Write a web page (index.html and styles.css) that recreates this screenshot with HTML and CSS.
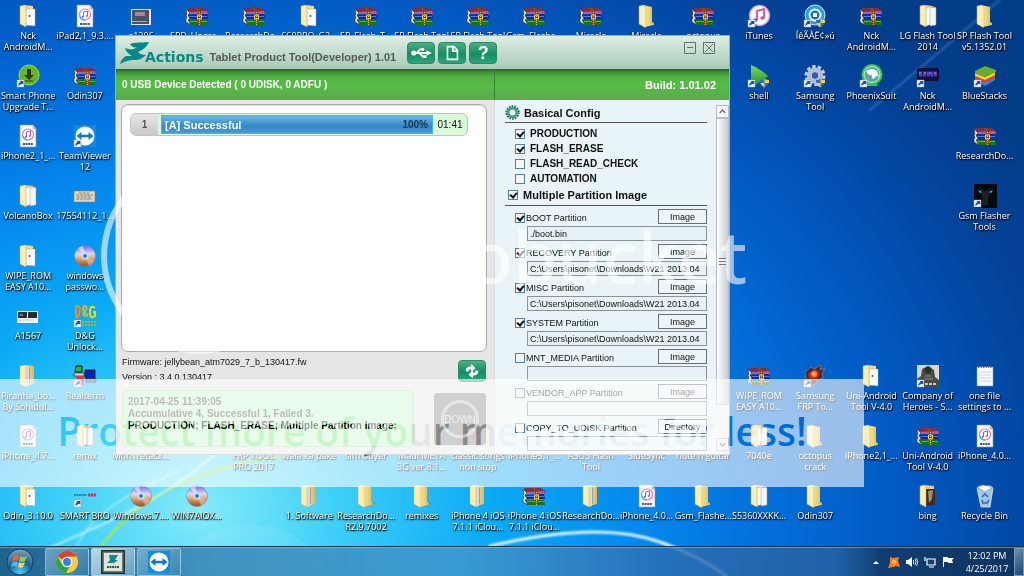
FILE: index.html
```html
<!DOCTYPE html>
<html lang="en">
<head>
<meta charset="utf-8">
<title>Desktop</title>
<link rel="stylesheet" href="styles.css">
</head>
<body>
<svg class="defs" aria-hidden="true">
<defs>
<linearGradient id="gf" x1="0" x2="1"><stop offset="0" stop-color="#fdf3b4"/><stop offset="1" stop-color="#d9b956"/></linearGradient>
<linearGradient id="gp" x1="0" x2="0" y1="0" y2="1"><stop offset="0" stop-color="#7ddd5c"/><stop offset="1" stop-color="#1c8a1c"/></linearGradient>
<linearGradient id="gd" x1="0" x2="0" y1="0" y2="1"><stop offset="0" stop-color="#6a6ae8"/><stop offset=".4" stop-color="#d8d8fa"/><stop offset=".55" stop-color="#e8b888"/><stop offset="1" stop-color="#9a4a1c"/></linearGradient>
<symbol id="arrow" viewBox="0 0 24 24"><path d="M1 16h7v7H1z" fill="#f4f8fc" stroke="#8aa" stroke-width=".5"/><path d="M2.500 22q-.5-3 2-4l-1-1h3.800v3.800l-1-1q-2 .5-3.800 2.200z" fill="#1b4ea8"/></symbol>
<symbol id="shield" viewBox="0 0 24 24"><path d="M13 16q3 0 4.500-1.500Q19 16 22 16q0 5-4.500 7.500Q13 21 13 16z" fill="#2a6fd0"/><path d="M17.500 14.500Q19 16 22 16v3h-4.500zM17.500 19v4.500Q14 22 13.300 19z" fill="#f6cf2c"/></symbol>
<symbol id="folder" viewBox="0 0 24 24"><path d="M8 21l9-1 4-2-3 4-8 1z" fill="#000" opacity=".25"/><path d="M8 1l9 2v15l2 1v2l-9 2z" fill="url(#gf)"/><path d="M4 2l5-1 2 3v19l-1 .5L4 20z" fill="#fbeeb0" stroke="#c8a850" stroke-width=".5"/></symbol>
<symbol id="docs" viewBox="0 0 24 24"><path d="M9 1l8 1v18l-8 2z" fill="#e7cd79"/><path d="M10 4l5-1v17l-5 2z" fill="#fff" stroke="#bbb" stroke-width=".5"/><path d="M14 4l5-1 1 1v17l-6 1z" fill="#f4f6f8" stroke="#999" stroke-width=".5"/><path d="M4 2l5-1 1 3v19L4 20z" fill="#fbeeb0" stroke="#c8a850" stroke-width=".5"/></symbol>
<symbol id="doc1" viewBox="0 0 24 24"><path d="M8 1l9 1v18l-8 2z" fill="#efd98e"/><path d="M10 5h9v17l-9-1z" fill="#fbfdff" stroke="#aaa" stroke-width=".5"/><circle cx="13.500" cy="12" r="1" fill="#357"/><path d="M4 2l5-1 1 3v19L4 20z" fill="#fbeeb0" stroke="#c8a850" stroke-width=".5"/></symbol>
<symbol id="zipf" viewBox="0 0 24 24"><path d="M8 1l10 1v18l-9 2z" fill="url(#gf)"/><path d="M10 4l3-1v19l-3 1z" fill="#d6dbe0"/><path d="M13 3l1 1v15l-1 1z" fill="#98a0a8"/><path d="M4 2l5-1 1 3v19L4 20z" fill="#fbeeb0" stroke="#c8a850" stroke-width=".5"/></symbol>
<symbol id="rar" viewBox="0 0 24 24"><path d="M1 5l3-1h15l4 3v3H4z" fill="#7a3048"/><path d="M4 8l18-1 1 3H5z" fill="#b85a98"/><path d="M2 11l20-1 1 5H4z" fill="#1a2890"/><path d="M4 12h18v1H5z" fill="#5878f0"/><path d="M2 16h20l1 5H5z" fill="#157418"/><path d="M5 17h17v1H5z" fill="#3fc13f"/><path d="M1 5l4 4-2 2 2 4-2 1 3 5-5-3v-3l1-1-1-3 1-1z" fill="#ede6e0" stroke="#333" stroke-width=".6"/><path d="M10 4l3 3v14h3V7l-3-3z" fill="#8b4a1c"/><path d="M14.500 8v13" stroke="#e9b847" stroke-dasharray="1 1"/><path d="M12.500 11h4v4h-4z" fill="none" stroke="#f2d35c"/></symbol>
<symbol id="ipsw" viewBox="0 0 24 24"><path d="M4 1h13l3 4v18H4z" fill="#f8f8fa" stroke="#999" stroke-width=".6"/><path d="M17 1v4h3" fill="#ccd" stroke="#999" stroke-width=".5"/><circle cx="12" cy="10.500" r="5.500" fill="#fff" stroke="#d777bd" stroke-width="1.200"/><path d="M6.800 12a5.500 5.500 0 0 0 5.200 4" fill="none" stroke="#5aa6f0" stroke-width="1.300"/><path d="M10.500 13V8l4-1v5" fill="none" stroke="#b24ad0"/><circle cx="9.700" cy="13" r="1" fill="#4b7df0"/><circle cx="13.700" cy="12" r="1" fill="#f0509a"/><path d="M7 20h10" stroke="#555" stroke-width="2" stroke-dasharray="2 .6"/></symbol>
<symbol id="disc" viewBox="0 0 24 24"><circle cx="12" cy="12" r="10.500" fill="url(#gd)" stroke="#888" stroke-width=".6"/><path d="M12 12L5 4a10 10 0 0 1 5-2z" fill="#fff" opacity=".5"/><path d="M12 12l4 10a10 10 0 0 0 5-5z" fill="#fff" opacity=".3"/><circle cx="12" cy="12" r="3.500" fill="#dde"/><circle cx="12" cy="12" r="2" fill="#1688dc"/></symbol>
<symbol id="tv" viewBox="0 0 24 24"><path d="M1 1h22v22H1z" fill="#1489e0"/><circle cx="12" cy="12" r="9.500" fill="#fff"/><path d="M3.500 12l5-4v2.700h7V8l5 4-5 4v-2.700h-7V16z" fill="#1276d8"/></symbol>
<symbol id="down" viewBox="0 0 24 24"><circle cx="13" cy="11" r="10" fill="#69b51f" stroke="#9bdd4d"/><path d="M11 5h4v6h3l-5 5-5-5h3z" fill="#263a20"/><path d="M9 17h8" stroke="#263a20"/></symbol>
<symbol id="photo" viewBox="0 0 24 24"><path d="M2 5h20v16H2z" fill="#dfe3e8"/><path d="M3 6h17v14H3z" fill="#4b5268"/><path d="M6 8h10v4H6z" fill="#8a90a8"/><path d="M8 10h6v1H8z" fill="#e06878"/><path d="M3 17h15v1H3z" fill="#aab"/></symbol>
<symbol id="card" viewBox="0 0 24 24"><path d="M1 7h21v11H1z" fill="#e2d8c6" stroke="#8a7c68" stroke-width=".6"/><path d="M6 9h11M3 11h17M4 13h14M3 15h16" stroke="#7c6858" stroke-width=".8" stroke-dasharray="3 .7"/></symbol>
<symbol id="phones" viewBox="0 0 24 24"><path d="M1 7h21v12H1z" fill="#f4f4f4"/><path d="M2 8h9v6H2zM12 8h9v6h-9z" fill="#282b34"/><path d="M4 10h3v2H4z" fill="#6f7f94"/><path d="M3 16h15" stroke="#ccc"/></symbol>
<symbol id="dg" viewBox="0 0 24 24"><path d="M3 2h2q4 2 0 11H3z" fill="none" stroke="#f08a28" stroke-width="2"/><path d="M15 13L10 6q0-4 2-4t1.500 3L10 10q1 4 5 0" fill="none" stroke="#d9b81e" stroke-width="1.800"/><path d="M22 4q-5-4-5 4t5 4V8h-2" fill="none" stroke="#f0d820" stroke-width="2"/><path d="M9 18h14M9 21h14" stroke="#9ab838" stroke-width="2" stroke-dasharray="2 1"/></symbol>
<symbol id="term" viewBox="0 0 24 24"><path d="M3 2h6v6H2z" fill="#29b53a" stroke="#111"/><path d="M12 6h10v8H12z" fill="#1020c0" stroke="#222"/><path d="M13 15h10v3H13z" fill="#777" stroke="#222"/><path d="M1 9h10v3H1z" fill="#d8d8d8" stroke="#222" stroke-width=".7"/><path d="M2 12h9v9H8z" fill="#dd3a3a"/></symbol>
<symbol id="itunes" viewBox="0 0 24 24"><circle cx="12.500" cy="11.500" r="10" fill="#fff" stroke="#c9a0e0" stroke-width="1.400"/><path d="M10 16V7l7-2v9" fill="none" stroke="#e0489a" stroke-width="1.800"/><ellipse cx="8.500" cy="16" rx="2.300" ry="1.800" fill="#8a5be0"/><ellipse cx="15.500" cy="14" rx="2.300" ry="1.800" fill="#f0506a"/></symbol>
<symbol id="ring" viewBox="0 0 24 24"><circle cx="12" cy="11" r="10" fill="#2a9fdc" stroke="#c4e8f8"/><circle cx="12" cy="11" r="5.500" fill="#1478bc" stroke="#fff" stroke-width="1.800"/><path d="M10 9h4v4h-4z" fill="#fff"/></symbol>
<symbol id="play" viewBox="0 0 24 24"><path d="M4 1q10 4 17 11Q13 19 4 23z" fill="url(#gp)"/></symbol>
<symbol id="gear" viewBox="0 0 24 24"><circle cx="12" cy="11.500" r="8.500" fill="none" stroke="#c6cce4" stroke-width="4" stroke-dasharray="3.300 2"/><circle cx="12" cy="11.500" r="5.500" fill="none" stroke="#b4bcd8" stroke-width="5"/><circle cx="12" cy="11.500" r="3" fill="#355e9c"/></symbol>
<symbol id="phoenix" viewBox="0 0 24 24"><path d="M7 22h12l-2-4H9z" fill="#3cc13e"/><circle cx="13" cy="10.500" r="9.500" fill="#58a8a8" stroke="#31cc38" stroke-width="2"/><circle cx="13" cy="10.500" r="8" fill="none" stroke="#e6f6ea" stroke-width=".8"/><path d="M7 7q6-4 11 0l2 6q-3-3-5 2-3-1-2-4-4 1-6-4z" fill="#f4faf4"/></symbol>
<symbol id="nck" viewBox="0 0 24 24"><rect x="1" y="4" width="22" height="13" rx="3" fill="#10103c"/><path d="M3 10h18" stroke="#5d3cc0" stroke-width="5" stroke-dasharray="3 .8" fill="none"/><path d="M3 9h17" stroke="#58b8f0" stroke-dasharray="2 3"/></symbol>
<symbol id="bs" viewBox="0 0 24 24"><path d="M2 14l10 4 10-5v3l-10 6-10-5z" fill="#2d88d8"/><path d="M2 11l10 4 10-5v4l-10 5-10-4z" fill="#e23c2f"/><path d="M2 9l10 4 10-5v3l-10 5-10-4z" fill="#f8d22c"/><path d="M2 7l10-5 11 4v2l-11 5L2 9z" fill="#68ad2a"/></symbol>
<symbol id="flash" viewBox="0 0 24 24"><path d="M1 0h23v24H1z" fill="#08090c"/><path d="M5 2q5 7 4 19h6Q14 9 20 2l-6 5h-3z" fill="#1c1f24"/><path d="M5 6l4 2-2 1zM20 6l-4 2 2 1z" fill="#2fd6ec"/></symbol>
<symbol id="dragon" viewBox="0 0 24 24"><path d="M2 8l6-5 3 2 7-4-1 5 5-2-3 5 1 5-5 2-5 6-4-5-3-3z" fill="#4a2830" stroke="#a88" stroke-width=".6"/><path d="M5 10l7-5 5 4-4 8-6-1z" fill="#b8301c"/><circle cx="11" cy="10" r="3" fill="#ff8a2a"/><circle cx="11" cy="10" r="1" fill="#ffe9a0"/></symbol>
<symbol id="company" viewBox="0 0 24 24"><path d="M1 1h22v22H1z" fill="#d5d8d2"/><path d="M1 23v-8l4-3 1-7 6-3 6 4 1 7 4 3v7z" fill="#4a4c44"/><circle cx="12" cy="6" r="3.500" fill="#2b2d27"/><path d="M9 12h6M8 15h9" stroke="#8a8c80"/><path d="M9 20h12" stroke="#eee" stroke-width="1.500" stroke-dasharray="3 1"/></symbol>
<symbol id="note" viewBox="0 0 24 24"><path d="M4 3h16v19H4z" fill="#f7f9fb" stroke="#99a" stroke-width=".6"/><path d="M5 3h14" stroke="#667" stroke-width="2" stroke-dasharray="1 1.500"/><path d="M6 8h12M6 11h12M6 14h12M6 17h12" stroke="#cdd5e0"/></symbol>
<symbol id="bin" viewBox="0 0 24 24"><path d="M4 4l3-2h10l3 2-3 19H8z" fill="#c5d6e4" fill-opacity=".85" stroke="#e9f5ff" stroke-width=".7"/><path d="M4 4q8 4 16 0" fill="none" stroke="#89a9c4"/><path d="M6 4l4-3 5 2 3 1-6 3z" fill="#fff"/><path d="M9 13l3-3 3 3M9 16l1 3h4l2-3" fill="none" stroke="#2270c8" stroke-width="1.600"/></symbol>
<symbol id="bingf" viewBox="0 0 24 24"><path d="M8 1l10 1v18l-9 2z" fill="#e7cd79"/><path d="M10 5h9v16l-9 1z" fill="#3a2a24"/><path d="M12 7l5-1-1 9-3 4z" fill="#a78a78"/><path d="M4 2l5-1 1 3v19L4 20z" fill="#fbeeb0" stroke="#c8a850" stroke-width=".5"/></symbol>
<symbol id="bro" viewBox="0 0 24 24"><path d="M1 11h13" stroke="#2b86b4" stroke-width="2" stroke-dasharray="2 .5"/><path d="M15 11h8" stroke="#e8285c" stroke-width="3" stroke-dasharray="2.300 .5"/></symbol>
</defs>
</svg>

<main class="desktop">
<svg class="wallpaper" viewBox="0 0 1024 576" preserveAspectRatio="none" aria-hidden="true">
<defs><filter id="soft"><feGaussianBlur stdDeviation="1.200"/></filter></defs>
<circle cx="250" cy="620" r="95" fill="#fff" opacity=".08"/>
<g fill="none" stroke-linecap="round" filter="url(#soft)">
<path d="M100 548C135 500 190 470 280 456" stroke="#a8e83c" stroke-width="2.500"/>
<path d="M50 548C110 520 170 500 230 440" stroke="#e8fcff" stroke-width="2" opacity=".7"/>
<path d="M76 548C90 515 125 495 180 470" stroke="#e8fcff" stroke-width="1.500" opacity=".6"/>
<path d="M490 546Q600 520 660 542T740 590" stroke="#dff4ff" stroke-width="3"/>
<path d="M870 110Q930 60 1000 0" stroke="#8fc8f4" stroke-width="2" opacity=".3"/>
</g>
</svg>

<nav class="icons" aria-label="Desktop items">
<div class="col">
<a href="#" class="item"><svg><use href="#doc1"/></svg><span>Nck<br>AndroidM...</span></a>
<a href="#" class="item"><svg><use href="#down"/><use href="#arrow"/></svg><span>Smart Phone<br>Upgrade T...</span></a>
<a href="#" class="item"><svg><use href="#ipsw"/></svg><span>iPhone2_1_...</span></a>
<a href="#" class="item"><svg><use href="#docs"/></svg><span>VolcanoBox</span></a>
<a href="#" class="item"><svg><use href="#doc1"/></svg><span>WIPE_ROM<br>EASY A10...</span></a>
<a href="#" class="item"><svg><use href="#phones"/></svg><span>A1567</span></a>
<a href="#" class="item"><svg><use href="#zipf"/></svg><span>Piranha_bo...<br>By Sohidul...</span></a>
<a href="#" class="item"><svg><use href="#ipsw"/></svg><span>iPhone_4.7...</span></a>
<a href="#" class="item"><svg><use href="#doc1"/></svg><span>Odin_3.10.0</span></a>
</div>
<div class="col">
<a href="#" class="item"><svg><use href="#ipsw"/></svg><span>iPad2,1_9.3....</span></a>
<a href="#" class="item"><svg><use href="#rar"/></svg><span>Odin307</span></a>
<a href="#" class="item"><svg><use href="#tv"/><use href="#arrow"/></svg><span>TeamViewer<br>12</span></a>
<a href="#" class="item"><svg><use href="#card"/></svg><span>17554112_1...</span></a>
<a href="#" class="item"><svg><use href="#disc"/></svg><span>windows<br>passwo...</span></a>
<a href="#" class="item"><svg><use href="#dg"/><use href="#arrow"/></svg><span>D&amp;G<br>Unlock...</span></a>
<a href="#" class="item"><svg><use href="#term"/><use href="#arrow"/></svg><span>Realterm</span></a>
<a href="#" class="item"><svg><use href="#docs"/></svg><span>remix</span></a>
<a href="#" class="item"><svg><use href="#bro"/><use href="#arrow"/></svg><span>SMART BRO</span></a>
</div>
<div class="col">
<a href="#" class="item"><svg><use href="#photo"/></svg><span>e1206</span></a>
<a href="#" class="item row8"><svg><use href="#folder"/></svg><span>MonTretacx...</span></a>
<a href="#" class="item row9"><svg><use href="#disc"/></svg><span>Windows.7....</span></a>
</div>
<div class="col">
<a href="#" class="item"><svg><use href="#rar"/></svg><span>SPD_Upgra...</span></a>
<a href="#" class="item row9"><svg><use href="#disc"/></svg><span>WIN7AIOX...</span></a>
</div>
<div class="col">
<a href="#" class="item"><svg><use href="#rar"/></svg><span>ResearchDo...</span></a>
<a href="#" class="item row8"><svg><use href="#folder"/></svg><span>FRP TOOL<br>PRO 2017</span></a>
</div>
<div class="col">
<a href="#" class="item"><svg><use href="#doc1"/></svg><span>660PRO_G2...</span></a>
<a href="#" class="item row8"><svg><use href="#folder"/></svg><span>wala ka pake</span></a>
<a href="#" class="item row9"><svg><use href="#zipf"/></svg><span>1. Software</span></a>
</div>
<div class="col">
<a href="#" class="item"><svg><use href="#rar"/></svg><span>SP_Flash_T...</span></a>
<a href="#" class="item row8"><svg><use href="#folder"/></svg><span>sim buyer</span></a>
<a href="#" class="item row9"><svg><use href="#folder"/></svg><span>ResearchDo...<br>R2.9.7002</span></a>
</div>
<div class="col">
<a href="#" class="item"><svg><use href="#rar"/></svg><span>SP Flash Tool</span></a>
<a href="#" class="item row8"><svg><use href="#folder"/></svg><span>Maui META<br>3G ver 8.1...</span></a>
<a href="#" class="item row9"><svg><use href="#folder"/></svg><span>remixes</span></a>
</div>
<div class="col">
<a href="#" class="item"><svg><use href="#rar"/></svg><span>SP Flash Tool</span></a>
<a href="#" class="item row8"><svg><use href="#folder"/></svg><span>classic songs<br>non stop</span></a>
<a href="#" class="item row9"><svg><use href="#zipf"/></svg><span>iPhone 4 iOS<br>7.1.1 iClou...</span></a>
</div>
<div class="col">
<a href="#" class="item"><svg><use href="#rar"/></svg><span>Gsm_Flashe...</span></a>
<a href="#" class="item row8"><svg><use href="#folder"/></svg><span>iPhone5,1_...</span></a>
<a href="#" class="item row9"><svg><use href="#rar"/></svg><span>iPhone 4 iOS<br>7.1.1 iClou...</span></a>
</div>
<div class="col">
<a href="#" class="item"><svg><use href="#rar"/></svg><span>Miracle</span></a>
<a href="#" class="item row8"><svg><use href="#folder"/></svg><span>ASUS Flash<br>Tool</span></a>
<a href="#" class="item row9"><svg><use href="#zipf"/></svg><span>ResearchDo...</span></a>
</div>
<div class="col">
<a href="#" class="item"><svg><use href="#folder"/></svg><span>Miracle</span></a>
<a href="#" class="item row8"><svg><use href="#folder"/></svg><span>SideSync</span></a>
<a href="#" class="item row9"><svg><use href="#ipsw"/></svg><span>iPhone_4.0...</span></a>
</div>
<div class="col">
<a href="#" class="item"><svg><use href="#rar"/></svg><span>octopus</span></a>
<a href="#" class="item row8"><svg><use href="#folder"/></svg><span>nute n guitar</span></a>
<a href="#" class="item row9"><svg><use href="#folder"/></svg><span>Gsm_Flashe...</span></a>
</div>
<div class="col">
<a href="#" class="item"><svg><use href="#itunes"/><use href="#arrow"/></svg><span>iTunes</span></a>
<a href="#" class="item"><svg><use href="#play"/><use href="#arrow"/><use href="#shield"/></svg><span>shell</span></a>
<a href="#" class="item row7"><svg><use href="#rar"/></svg><span>WIPE_ROM<br>EASY A10...</span></a>
<a href="#" class="item row8"><svg><use href="#docs"/></svg><span>7040e</span></a>
<a href="#" class="item row9"><svg><use href="#docs"/></svg><span>S5360XXKK...</span></a>
</div>
<div class="col">
<a href="#" class="item"><svg><use href="#ring"/><use href="#arrow"/><use href="#shield"/></svg><span>ÍêÃÀË¢»ú</span></a>
<a href="#" class="item"><svg><use href="#gear"/><use href="#arrow"/><use href="#shield"/></svg><span>Samsung<br>Tool</span></a>
<a href="#" class="item row7"><svg><use href="#dragon"/><use href="#arrow"/></svg><span>Samsung<br>FRP To...</span></a>
<a href="#" class="item row8"><svg><use href="#folder"/></svg><span>octopus<br>crack</span></a>
<a href="#" class="item row9"><svg><use href="#folder"/></svg><span>Odin307</span></a>
</div>
<div class="col">
<a href="#" class="item"><svg><use href="#rar"/></svg><span>Nck<br>AndroidM...</span></a>
<a href="#" class="item"><svg><use href="#phoenix"/><use href="#arrow"/></svg><span>PhoenixSuit</span></a>
<a href="#" class="item row7"><svg><use href="#doc1"/></svg><span>Uni-Android<br>Tool V-4.0</span></a>
<a href="#" class="item row8"><svg><use href="#folder"/></svg><span>iPhone2,1_...</span></a>
</div>
<div class="col">
<a href="#" class="item"><svg><use href="#docs"/></svg><span>LG Flash Tool<br>2014</span></a>
<a href="#" class="item"><svg><use href="#nck"/><use href="#arrow"/></svg><span>Nck<br>AndroidM...</span></a>
<a href="#" class="item row7"><svg><use href="#company"/><use href="#arrow"/></svg><span>Company of<br>Heroes - S...</span></a>
<a href="#" class="item row8"><svg><use href="#rar"/></svg><span>Uni-Android<br>Tool V-4.0</span></a>
<a href="#" class="item row9"><svg><use href="#bingf"/></svg><span>bing</span></a>
</div>
<div class="col">
<a href="#" class="item"><svg><use href="#folder"/></svg><span>SP Flash Tool<br>v5.1352.01</span></a>
<a href="#" class="item"><svg><use href="#bs"/><use href="#arrow"/></svg><span>BlueStacks</span></a>
<a href="#" class="item"><svg><use href="#rar"/></svg><span>ResearchDo...</span></a>
<a href="#" class="item"><svg><use href="#flash"/><use href="#arrow"/></svg><span>Gsm Flasher<br>Tools</span></a>
<a href="#" class="item row7"><svg><use href="#note"/></svg><span>one file<br>settings to ...</span></a>
<a href="#" class="item row8"><svg><use href="#ipsw"/></svg><span>iPhone_4.0...</span></a>
<a href="#" class="item row9"><svg><use href="#bin"/></svg><span>Recycle Bin</span></a>
</div>
</nav>

<section class="window" aria-label="Tablet Product Tool">
<header class="titlebar">
<svg class="mark" viewBox="0 0 30 22" aria-hidden="true"><path d="M10 2C14 0 20 1 29 0 27 4 25 6 22 8l-4 2c2 2 4 3 8 3-4 4-7 5-11 5-6 0-9 1-15 4 1-4 3-6 6-8h6C9 12 6 10 5 6c5 2 9 2 12-1C14 6 12 5 10 2z" fill="#068a87"/></svg>
<strong class="brand">Actions</strong>
<h1>Tablet Product Tool(Developer) 1.01</h1>
<div class="tools">
<button class="green" type="button" aria-label="USB"><svg viewBox="0 0 28 22"><path d="M6 11h15M9 11l4-4h3M12 11l4 4h3" fill="none" stroke="#fff" stroke-width="2"/><circle cx="6" cy="11" r="2.800" fill="#fff"/><path d="M20 8l6 3-6 3z" fill="#fff"/><circle cx="16" cy="7" r="1.700" fill="#fff"/><path d="M16 13.500h4v3h-4z" fill="#fff"/></svg></button>
<button class="green" type="button" aria-label="New file"><svg viewBox="0 0 28 22"><path d="M9 4h7l4 4v10H9zM15 4v5h5" fill="none" stroke="#fff" stroke-width="1.800"/></svg></button>
<button class="green help" type="button" aria-label="Help">?</button>
</div>
<div class="controls">
<button type="button" aria-label="Minimize"><svg viewBox="0 0 12 12"><path d="M.5.500h11v11H.5zM3 5.500h6" fill="none" stroke="#667069"/></svg></button>
<button type="button" aria-label="Close"><svg viewBox="0 0 12 12"><path d="M.5.500h11v11H.5zM2 2l8 8M10 2l-8 8" fill="none" stroke="#667069"/></svg></button>
</div>
</header>
<div class="statusbar"><span class="detected">0 USB Device Detected ( 0 UDISK, 0 ADFU )</span><span class="build">Build: 1.01.02</span></div>
<div class="content">
<div class="left">
<div class="devices">
<div class="device"><span class="num">1</span><div class="progress"><span>[A] Successful</span><span class="pct">100%</span></div><span class="time">01:41</span></div>
</div>
<div class="info">
<div><p>Firmware: jellybean_atm7029_7_b_130417.fw</p><p>Version : 3.4.0.130417</p></div>
<button class="green" type="button" aria-label="Refresh"><svg viewBox="0 0 28 22"><path d="M7 11q0-5 6-5V3l5 5-5 4V9q-3 0-3 3zM21 11q0 5-6 5v3l-5-4 5-5v3q3 0 3-3z" fill="#fff"/></svg></button>
</div>
<div class="bottom">
<div class="log"><p>2017-04-25 11:39:05</p><p>Accumulative 4, Successful 1, Failed 3.</p><p class="dark">PRODUCTION; FLASH_ERASE; Multiple Partition Image;</p></div>
<button class="downbtn" type="button"><span>DOWN</span></button>
</div>
</div>
<div class="right">
<div class="settings">
<h2><svg class="cog" viewBox="0 0 16 16" aria-hidden="true"><circle cx="8" cy="8" r="6.300" fill="none" stroke="#1f6f5c" stroke-width="2.800" stroke-dasharray="1.700 1.100"/><circle cx="8" cy="8" r="4.500" fill="none" stroke="#3a9c80" stroke-width="2.500"/></svg>Basical Config</h2>
<div class="options">
<label><input type="checkbox" checked>PRODUCTION</label>
<label><input type="checkbox" checked>FLASH_ERASE</label>
<label><input type="checkbox">FLASH_READ_CHECK</label>
<label><input type="checkbox">AUTOMATION</label>
</div>
<h2 class="multi"><label><input type="checkbox" checked>Multiple Partition Image</label></h2>
<div class="partitions">
<div class="part"><label><input type="checkbox" checked>BOOT Partition</label><button type="button">Image</button><input type="text" aria-label="BOOT path" value="./boot.bin"></div>
<div class="part"><label><input type="checkbox" checked>RECOVERY Partition</label><button type="button">Image</button><input type="text" aria-label="RECOVERY path" value="C:\Users\pisonet\Downloads\W21 2013.04"></div>
<div class="part"><label><input type="checkbox" checked>MISC Partition</label><button type="button">Image</button><input type="text" aria-label="MISC path" value="C:\Users\pisonet\Downloads\W21 2013.04"></div>
<div class="part"><label><input type="checkbox" checked>SYSTEM Partition</label><button type="button">Image</button><input type="text" aria-label="SYSTEM path" value="C:\Users\pisonet\Downloads\W21 2013.04"></div>
<div class="part"><label><input type="checkbox">MNT_MEDIA Partition</label><button type="button">Image</button><input type="text" aria-label="MNT_MEDIA path"></div>
<div class="part"><label><input type="checkbox">VENDOR_APP Partition</label><button type="button">Image</button><input type="text" aria-label="VENDOR_APP path"></div>
<div class="part"><label><input type="checkbox">COPY_TO_UDISK Partition</label><button type="button">Directory</button><input type="text" aria-label="COPY_TO_UDISK path"></div>
</div>
</div>
<div class="scroll" aria-hidden="true">
<svg viewBox="0 0 12 12"><path d="M3 7.500l3-3 3 3" fill="none" stroke="#556" stroke-width="1.300"/></svg>
<div class="thumb"><i></i></div>
<svg class="sdown" viewBox="0 0 12 12"><path d="M3 4.500l3 3 3-3" fill="none" stroke="#556" stroke-width="1.300"/></svg>
</div>
</div>
</div>
</section>

<div class="logo-mark"><span class="halo"></span><span class="word">photobucket</span></div>
<div class="banner">Protect more of your memories for less!</div>

<footer class="taskbar">
<button class="start" type="button" aria-label="Start"><svg viewBox="0 0 28 28"><defs><radialGradient id="orb" cx=".5" cy=".9" r=".9"><stop offset="0" stop-color="#4fd0f4"/><stop offset=".5" stop-color="#19629c"/><stop offset="1" stop-color="#83a6bd"/></radialGradient></defs><circle cx="14" cy="14" r="13" fill="url(#orb)" stroke="#123c60"/><path d="M7 9q3-3 6-1l-1 5q-3-2-6 1z" fill="#ef6335"/><path d="M14 8q3 2 7 0l-2 5q-3 2-6 0z" fill="#93cc42"/><path d="M6 15q3-3 6-1l-1 5q-3-2-6 0z" fill="#55b4f0"/><path d="M13 14q3 2 6 0l-2 5q-2 2-5 0z" fill="#fbd24a"/></svg></button>
<button class="task" type="button" aria-label="Chrome"><svg viewBox="0 0 24 24"><circle cx="12" cy="12" r="11" fill="#f8cf3a"/><path d="M12 12L2.500 6.500A11 11 0 0 1 21.500 6.500H12z" fill="#e0402f"/><path d="M12 12L7 14 2.500 6.500A11 11 0 0 0 11 23l5-9z" fill="#2fa34c"/><circle cx="12" cy="12" r="5.300" fill="#fff"/><circle cx="12" cy="12" r="4" fill="#3c7ee8"/></svg></button>
<button class="task active" type="button" aria-label="Actions"><svg viewBox="0 0 24 24"><path d="M.8.800h22.400v22.400H.8z" fill="#707a74" stroke="#23302a" stroke-width="1.500"/><path d="M3 3h18v18H3z" fill="#dce4de"/><path d="M8 5h9l-3 5h3l-4 3H6l3-3z" fill="#128a83"/><path d="M6 17h12" stroke="#222" stroke-width="1.500" stroke-dasharray="2 .5"/></svg></button>
<button class="task" type="button" aria-label="TeamViewer"><svg viewBox="0 0 24 24"><use href="#tv"/></svg></button>
<div class="tray">
<svg class="up" viewBox="0 0 12 12"><path d="M3 8l3-3 3 3z" fill="#fff"/></svg>
<svg viewBox="0 0 12 12"><path d="M2 1l3 1 6-1-1 4 2 6-4-1-3 1-5 1 2-5z" fill="#ff7a18"/><circle cx="6" cy="6" r="1.500" fill="none" stroke="#fff" stroke-width=".8"/></svg>
<svg viewBox="0 0 12 12"><path d="M0 4h2l4-3v10L2 8H0z" fill="#fff"/><path d="M7.500 4v4M9 3q2 3 0 6M10.500 2q2.500 4 0 8" stroke="#fff" fill="none" stroke-width=".8"/></svg>
<svg viewBox="0 0 12 12"><path d="M3 3h8v6H3zM5 11h5M1 1v4" fill="#246" fill-opacity=".6" stroke="#fff" stroke-width="1.200"/></svg>
<svg viewBox="0 0 12 12"><path d="M1.500 1v10" stroke="#fff"/><path d="M2 1h4v1h6L10 4l1 3H6V6H2z" fill="#fff"/></svg>
<time>12:02 PM<br>4/25/2017</time>
</div>
<button class="peek" type="button" aria-label="Show desktop"></button>
</footer>
</main>
</body>
</html>
```
FILE: styles.css
```css
* { box-sizing: border-box; }
html, body { height: 100%; }
body { margin: 0; overflow: hidden; font-family: "Liberation Sans", Arial, sans-serif; font-size: 10px; }
p, h1, h2 { margin: 0; }
button { font: inherit; padding: 0; cursor: pointer; }
.defs { position: absolute; width: 0; height: 0; }

.desktop {
  position: relative;
  display: flex;
  flex-direction: column;
  min-height: 100vh;
  isolation: isolate;
  overflow: hidden;
  background: radial-gradient(ellipse 960px 720px at 200px 510px, #86ecfa 0, #3fd0f8 14%, #0cabf6 30%, #058cf0 44%, #0370dc 58%, #0258c0 74%, #034299 90%, #033c88 100%);
}
.wallpaper { position: absolute; inset: 0; width: 100%; height: 100%; }

.icons { position: relative; flex: 1; display: grid; grid-template-columns: repeat(18, minmax(0, 1fr)); padding-right: 12px; }
.col { display: grid; grid-template-rows: repeat(9, 60px); }
.item {
  display: flex; flex-direction: column; align-items: center; gap: 2px; padding-top: 4px;
  color: #fff; text-decoration: none; text-align: center; white-space: nowrap;
  font: 500 9px/11px "Open Sans", "Noto Sans", sans-serif;
  text-shadow: 0 1px 2px #000, 1px 1px 1px #000;
}
.item svg { flex: none; width: 24px; height: 24px; }
.row7 { grid-row: 7; }
.row8 { grid-row: 8; }
.row9 { grid-row: 9; }

.window { position: absolute; left: 115px; right: 294px; top: 35px; border: 1px solid #a3aaa8; background: #e5e5e5; color: #111; }
.titlebar { display: flex; align-items: center; height: 33px; padding: 0 14px 0 4px; background: linear-gradient(#deeee4, #a9cab9); }
.mark { width: 30px; height: 22px; }
.brand { margin-left: -5px; padding-top: 9px; color: #088a86; font: bold 14px "DejaVu Sans", sans-serif; }
.titlebar h1 { margin: 8px 0 0 6px; font-size: 11px; color: #555b57; white-space: nowrap; }
.tools { display: flex; gap: 3px; margin-left: 11px; }
.green { width: 28px; height: 22px; border: 1px solid #2b8a68; border-radius: 4px; background: linear-gradient(#4dae7f, #128e65 55%, #2aa57c); color: #fff; }
.green svg { display: block; width: 26px; height: 20px; }
.help { font-size: 18px; font-weight: bold; line-height: 18px; }
.controls { display: flex; gap: 7px; margin-left: auto; padding-bottom: 10px; }
.controls button { border: 0; background: none; width: 12px; height: 12px; }
.controls svg { display: block; width: 12px; height: 12px; }

.statusbar { display: flex; height: 31px; color: #fff; font-weight: bold; line-height: 32px; background: linear-gradient(#285d24 0, #3f8e34 3px, #51b344 8px, #57bb47 16px, #5ba94a); }
.detected { flex: 1; padding-left: 6px; border-right: 1px solid #3c8535; }
.build { width: 234px; padding-right: 13px; text-align: right; font-size: 11px; }

.content { display: flex; height: 354px; }
.left { flex: 1; min-width: 0; padding: 4px 7px 8px 5px; border-right: 1px solid #d2dcde; }
.devices { height: 248px; padding: 8px; border: 1px solid #aaa; border-radius: 7px; background: #fff; box-shadow: inset 0 1px 1px #ddd; }
.device { display: flex; width: 338px; max-width: 100%; height: 23px; border: 1px solid #bcc8b8; border-radius: 6px; background: #d8fad7; overflow: hidden; }
.num { width: 27px; background: linear-gradient(#e6e6e6, #c9c9c9); font-weight: bold; text-align: center; line-height: 21px; color: #555; }
.progress { flex: 1; display: flex; justify-content: space-between; margin: 1px 0 1px 3px; padding: 0 4px 0 3px; border: 1px solid #49b1ee; background: linear-gradient(#65bae9, #3686c6 60%, #479bd9); color: #fff; font-size: 11px; font-weight: bold; line-height: 18px; }
.pct { color: #183449; font-size: 10px; }
.time { width: 34px; text-align: center; line-height: 22px; }
.info { display: flex; justify-content: space-between; padding: 3px 1px 0; font-size: 9px; line-height: 15px; }
.info .green { margin-top: 5px; }
.bottom { display: flex; justify-content: space-between; padding: 5px 1px 0; }
.log { width: 292px; height: 57px; padding: 5px; border: 1px solid #b8dcb8; border-radius: 5px; background: #c7f6ca; color: #555; font-weight: bold; line-height: 12px; white-space: nowrap; }
.log .dark { color: #000; }
.downbtn { width: 52px; height: 52px; margin-top: 3px; padding: 7px; border: 0; border-radius: 3px; background: #898989; color: #ddd; }
.downbtn span { display: flex; align-items: center; justify-content: center; height: 38px; border: 3px solid #c4c4c4; border-radius: 50%; background: #888; }

.right { display: flex; width: 234px; padding: 5px 0 3px 10px; background: #e8f4f7; }
.settings { flex: 1; overflow: hidden; padding-right: 9px; }
.settings h2 { display: flex; align-items: center; gap: 4px; height: 18px; padding-bottom: 2px; border-bottom: 1px solid #555; font-size: 11px; }
.cog { width: 15px; height: 15px; }
.options { display: grid; padding: 3px 0 0 10px; }
.options label { display: flex; align-items: center; gap: 5px; height: 15px; font-weight: bold; }
input[type="checkbox"] { appearance: none; flex: none; width: 10px; height: 10px; margin: 0; border: 1px solid #567f9c; background: #f4f6f4; }
input[type="checkbox"]:checked::before { content: ""; display: block; width: 3px; height: 5px; margin: 0 0 0 2px; border: solid #111; border-width: 0 2px 2px 0; transform: rotate(40deg); }
.settings .multi { height: 20px; padding-left: 3px; }
.multi label { display: flex; align-items: center; gap: 5px; }
.partitions { display: grid; gap: 3px; padding: 3px 0 0 10px; font-size: 9px; }
.part { display: grid; grid-template-columns: 1fr 49px; row-gap: 2px; }
.part label { display: flex; align-items: center; gap: 1px; padding-top: 2px; white-space: nowrap; }
.part button { height: 15px; border: 1px solid #667077; background: #ecf5f8; color: #111; line-height: 12px; }
.part input[type="text"] { grid-column: 1 / 3; min-width: 0; height: 15px; margin-left: 12px; padding: 0 2px; border: 1px solid #8a9499; background: #e6f2f5; font: 9px "Liberation Sans", Arial, sans-serif; color: #111; }

.scroll { display: flex; flex-direction: column; width: 13px; background: #f1f3f5; }
.scroll svg { width: 13px; height: 13px; border: 1px solid #b8bcc4; background: #f6f6f8; }
.thumb { flex: 1; display: flex; align-items: center; justify-content: center; margin-bottom: 33px; border: 1px solid #b8bcc4; background: linear-gradient(90deg, #fff, #c9ccd2); }
.thumb i { width: 7px; height: 8px; background: repeating-linear-gradient(#777 0 1px, #eee 1px 3px); }
.sdown { flex: none; }

.logo-mark { position: absolute; left: 101px; top: 154px; display: flex; align-items: center; width: 646px; height: 204px; mix-blend-mode: screen; pointer-events: none; }
.halo { flex: none; width: 196px; height: 196px; border: 6px solid #999; border-radius: 50%; }
.word { margin-left: auto; color: #999; font: 500 72px "Noto Sans", sans-serif; }
.banner { position: absolute; left: 0; right: 160px; top: 379px; height: 108px; background: #999; color: #000; mix-blend-mode: screen; text-align: center; white-space: nowrap; font: 600 39px/104px "Open Sans", sans-serif; pointer-events: none; }

.taskbar { position: relative; display: flex; align-items: center; height: 30px; border-top: 1px solid #17344f; background: linear-gradient(90deg, #1f5b84ee 0, #3a86b6dd 20%, #4496c8cc 45%, #2e6cb0cc 65%, #24609fdd 82%, #123c6bee 86%, #0e3560 100%); box-shadow: inset 0 1px #8fc4dd88; }
.start { width: 45px; height: 29px; padding-right: 5px; border: 0; background: none; }
.start svg { width: 28px; height: 28px; display: block; margin: auto; }
.task { width: 44px; height: 28px; margin-right: 2px; border: 1px solid #b8dcec99; border-radius: 2px; background: linear-gradient(135deg, #9cc9df99, #3c83ae66); }
.task svg { display: block; width: 24px; height: 24px; margin: auto; }
.active { background: linear-gradient(135deg, #e4f2f8cc, #83b8d599); }
.tray { display: flex; align-items: center; gap: 6px; margin-left: auto; }
.tray svg { width: 12px; height: 12px; }
.tray time { width: 54px; color: #fff; text-align: center; font: 9px/13px "Open Sans", sans-serif; }
.peek { width: 10px; height: 28px; border: 1px solid #7899b5; background: linear-gradient(135deg, #6f91ae, #1b446f); }
```
